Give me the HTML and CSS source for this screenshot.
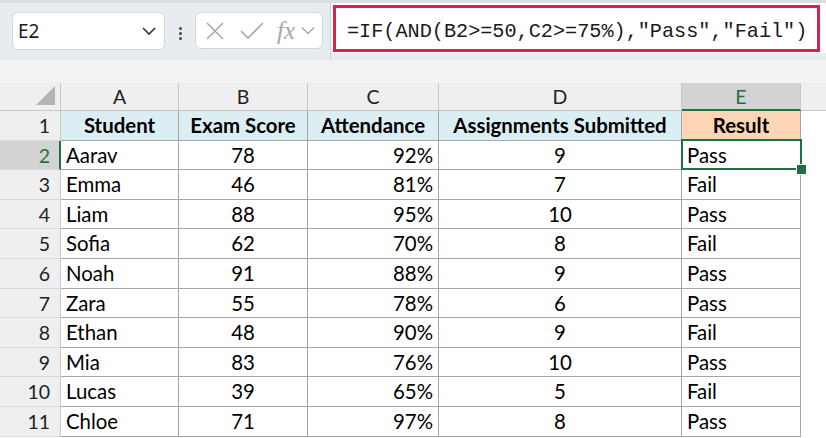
FILE: index.html
```html
<!DOCTYPE html>
<html lang="en">
<head>
    <meta charset="UTF-8">
    <title>Student Results</title>
    <link rel="stylesheet" href="styles.css">
</head>
<body>
    <div class="formula-bar">
        <div class="name-box">
            <span class="name-text">E2</span>
            <svg class="chev" width="16" height="10" viewBox="0 0 16 10"><path d="M2 2 L8 8 L14 2" fill="none" stroke="#333" stroke-width="1.6"/></svg>
        </div>
        <div class="grip"><span></span><span></span><span></span></div>
        <div class="fn-box">
            <svg width="20" height="20" viewBox="0 0 20 20"><path d="M2 2 L18 18 M18 2 L2 18" stroke="#a8a8a8" stroke-width="1.6"/></svg>
            <svg width="26" height="20" viewBox="0 0 26 20"><path d="M2 10 L9 17 L24 2" fill="none" stroke="#a8a8a8" stroke-width="1.6"/></svg>
            <span class="fx">fx</span>
            <svg width="14" height="9" viewBox="0 0 14 9"><path d="M1 1.5 L7 7.5 L13 1.5" fill="none" stroke="#a8a8a8" stroke-width="1.4"/></svg>
        </div>
        <div class="formula-input">
            <div class="formula-text">=IF(AND(B2&gt;=50,C2&gt;=75%),"Pass","Fail")</div>
        </div>
    </div>

    <div class="sheet-gap"></div>

    <div class="sheet">
        <div class="corner"><span class="corner-tri"></span></div>
        <div class="col-head">A</div>
        <div class="col-head">B</div>
        <div class="col-head">C</div>
        <div class="col-head">D</div>
        <div class="col-head selected">E</div>
        <div class="col-head blank"></div>

        <div class="row-head">1</div>
        <div class="cell th">Student</div>
        <div class="cell th">Exam Score</div>
        <div class="cell th">Attendance</div>
        <div class="cell th">Assignments Submitted</div>
        <div class="cell th result">Result</div>
        <div class="cell empty"></div>

        <div class="row-head selected">2</div>
        <div class="cell">Aarav</div><div class="cell c">78</div><div class="cell r">92%</div><div class="cell c">9</div><div class="cell active">Pass<span class="sel-box"><span class="sel-handle"></span></span></div><div class="cell empty"></div>

        <div class="row-head">3</div>
        <div class="cell">Emma</div><div class="cell c">46</div><div class="cell r">81%</div><div class="cell c">7</div><div class="cell">Fail</div><div class="cell empty"></div>

        <div class="row-head">4</div>
        <div class="cell">Liam</div><div class="cell c">88</div><div class="cell r">95%</div><div class="cell c">10</div><div class="cell">Pass</div><div class="cell empty"></div>

        <div class="row-head">5</div>
        <div class="cell">Sofia</div><div class="cell c">62</div><div class="cell r">70%</div><div class="cell c">8</div><div class="cell">Fail</div><div class="cell empty"></div>

        <div class="row-head">6</div>
        <div class="cell">Noah</div><div class="cell c">91</div><div class="cell r">88%</div><div class="cell c">9</div><div class="cell">Pass</div><div class="cell empty"></div>

        <div class="row-head">7</div>
        <div class="cell">Zara</div><div class="cell c">55</div><div class="cell r">78%</div><div class="cell c">6</div><div class="cell">Pass</div><div class="cell empty"></div>

        <div class="row-head">8</div>
        <div class="cell">Ethan</div><div class="cell c">48</div><div class="cell r">90%</div><div class="cell c">9</div><div class="cell">Fail</div><div class="cell empty"></div>

        <div class="row-head">9</div>
        <div class="cell">Mia</div><div class="cell c">83</div><div class="cell r">76%</div><div class="cell c">10</div><div class="cell">Pass</div><div class="cell empty"></div>

        <div class="row-head">10</div>
        <div class="cell">Lucas</div><div class="cell c">39</div><div class="cell r">65%</div><div class="cell c">5</div><div class="cell">Fail</div><div class="cell empty"></div>

        <div class="row-head">11</div>
        <div class="cell">Chloe</div><div class="cell c">71</div><div class="cell r">97%</div><div class="cell c">8</div><div class="cell">Pass</div><div class="cell empty"></div>
    </div>
</body>
</html>
```

FILE: styles.css
```css
* {
    margin: 0;
    padding: 0;
    box-sizing: border-box;
}

body {
    width: 826px;
    height: 438px;
    overflow: hidden;
    background: #ffffff;
    font-family: Lato, 'Open Sans', sans-serif;
    color: #000;
}

/* formula bar */
.formula-bar {
    height: 60px;
    background: #e9ecef;
    border-top: 3px solid #dcdfe2;
    display: flex;
    align-items: flex-start;
    padding-left: 12px;
}

.formula-bar > * {
    flex-shrink: 0;
}

.name-box {
    margin-top: 9px;
    width: 153px;
    height: 38px;
    background: #fff;
    border: 1px solid #d3d6da;
    border-radius: 6px;
    display: flex;
    align-items: center;
    justify-content: space-between;
    padding: 0 7px 0 5px;
}

.name-text {
    font-family: 'Noto Sans', sans-serif;
    font-size: 19px;
    color: #1a1a1a;
}

.grip {
    margin: 24px 0 0 0;
    width: 30px;
    display: flex;
    flex-direction: column;
    align-items: center;
    gap: 2px;
}

.grip span {
    width: 3px;
    height: 3px;
    border-radius: 50%;
    background: #444;
}

.fn-box {
    margin-top: 9px;
    width: 128px;
    height: 37px;
    background: #fff;
    border: 1px solid #d3d6da;
    border-radius: 6px;
    display: flex;
    align-items: center;
    gap: 14px;
    padding-left: 9px;
}

.fx {
    font-family: 'Liberation Serif', serif;
    font-style: italic;
    font-size: 25px;
    line-height: 1;
    color: #a8a8a8;
    margin-left: -2px;
    margin-right: -8px;
}

.formula-input {
    margin-left: 7px;
    width: 496px;
    height: 57px;
    border-left: 1px solid #cfd2d6;
    padding: 2px 6px 0 2px;
    background: linear-gradient(#fff 0, #fff 50px, #e9ecef 50px);
}

.formula-text {
    height: 47px;
    border: 3px solid #dc1f4b;
    background: #fff;
    font-family: 'Liberation Mono', monospace;
    font-size: 20.2px;
    line-height: 40px;
    padding: 4px 0 0 11px;
    color: #1a1a1a;
    white-space: nowrap;
    overflow: hidden;
}

.sheet-gap {
    height: 23px;
    background: #f3f3f3;
}

/* grid */
.sheet {
    display: grid;
    grid-template-columns: 61px 118px 129px 131px 243px 119px 1fr;
    grid-template-rows: 28px;
    grid-auto-rows: 29.6px;
    font-size: 20.4px;
}

.corner {
    background: #efefef;
    border-right: 1px solid #c8c8c8;
    border-bottom: 1px solid #c8c8c8;
    position: relative;
}

.corner-tri {
    position: absolute;
    right: 5px;
    bottom: 5px;
    width: 0;
    height: 0;
    border-left: 19px solid transparent;
    border-bottom: 19px solid #b4b4b4;
}

.col-head {
    background: #efefef;
    border-right: 1px solid #c8c8c8;
    border-bottom: 1px solid #c8c8c8;
    text-align: center;
    line-height: 27px;
    font-size: 19.5px;
    color: #222;
}

.col-head.selected {
    background: #d3d3d3;
    color: #1e7145;
    border-bottom: 2px solid #1e7145;
}

.col-head.blank {
    border-right: none;
}

.row-head {
    background: #efefef;
    border-right: 1px solid #c8c8c8;
    border-bottom: 1px solid #dadada;
    text-align: right;
    padding-right: 10px;
    line-height: 29px;
    font-size: 19.5px;
    color: #222;
}

.row-head.selected {
    background: #d3d3d3;
    color: #1e7145;
    border-right: 2px solid #1e7145;
    padding-right: 9px;
}

.cell {
    border-right: 1px solid #a6a6a6;
    border-bottom: 1px solid #a6a6a6;
    padding: 0 5px;
    line-height: 29px;
    white-space: nowrap;
    position: relative;
}

.cell.c {
    text-align: center;
}

.cell.r {
    text-align: right;
}

.cell.th {
    background: #dbeef4;
    font-weight: bold;
    text-align: center;
}

.cell.th.result {
    background: #fcd5b4;
}

.cell.empty {
    border: none;
}

.cell.active {
    z-index: 2;
}

.sel-box {
    position: absolute;
    left: -1px;
    top: -2px;
    right: -2px;
    bottom: -1px;
    border: 2px solid #1e7145;
}

.sel-handle {
    position: absolute;
    right: -6px;
    bottom: -6px;
    width: 9px;
    height: 9px;
    background: #1e7145;
    outline: 1px solid #fff;
}
```
